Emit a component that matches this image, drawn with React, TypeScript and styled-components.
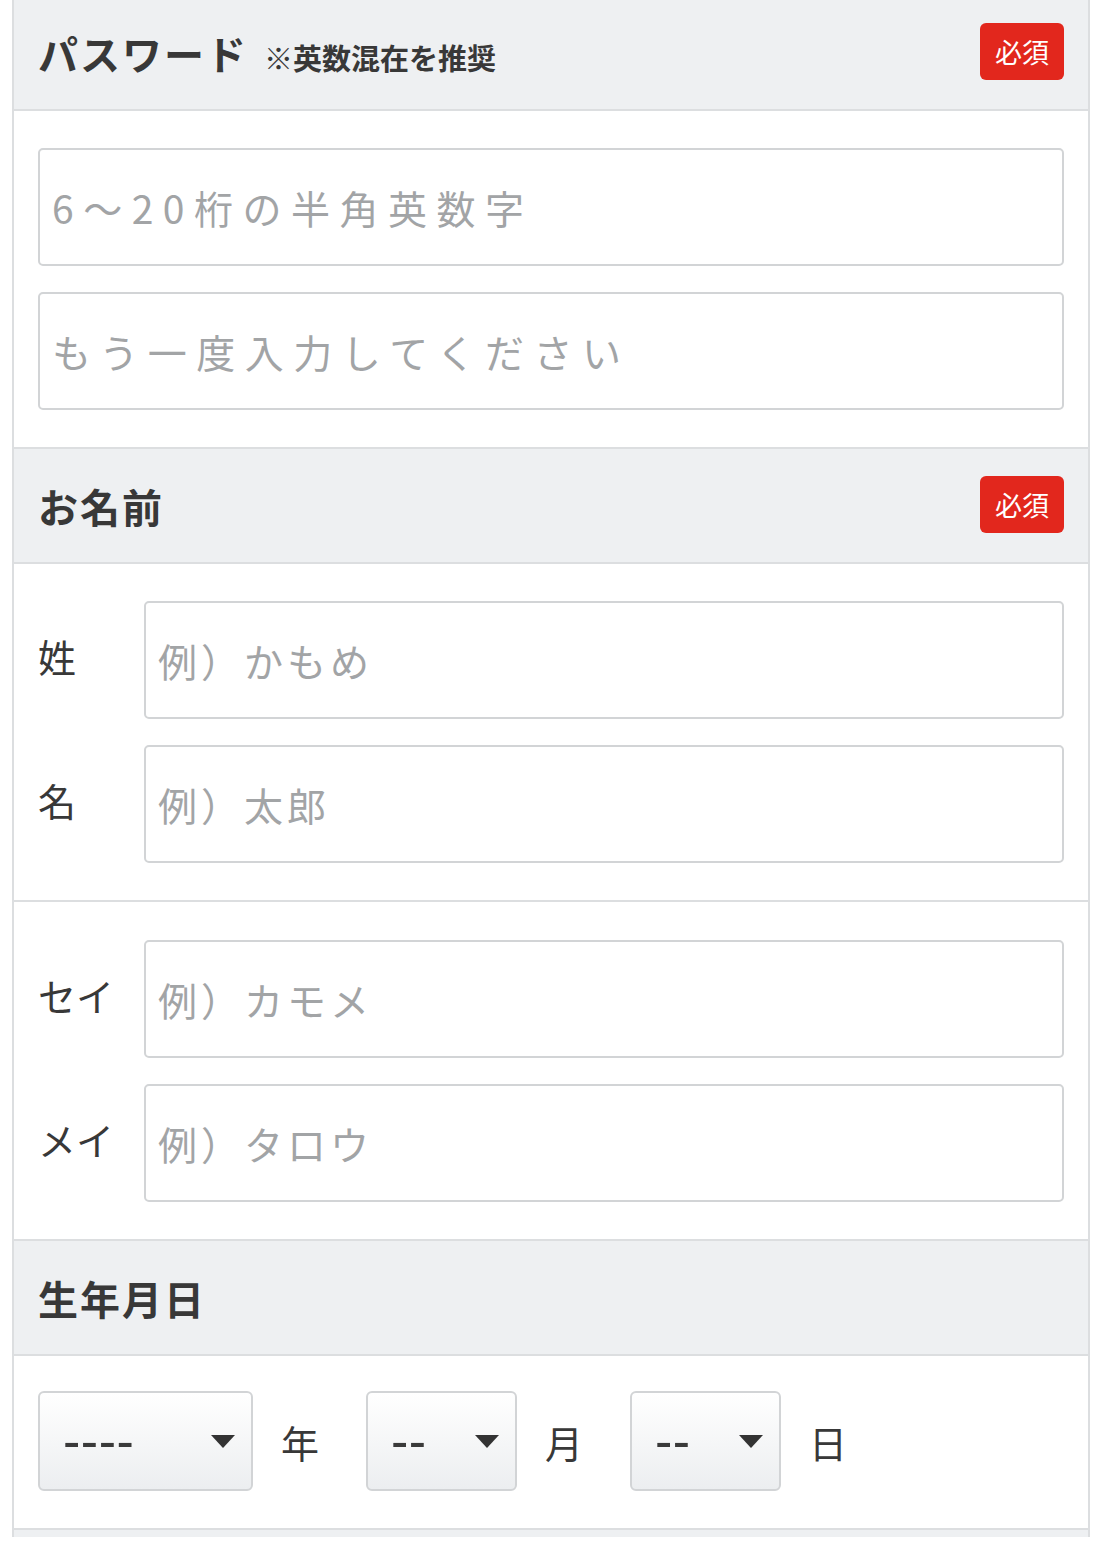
import React from "react";
import styled, { createGlobalStyle } from "styled-components";

const GlobalStyle = createGlobalStyle`
  html, body { margin: 0; padding: 0; background: #ffffff; }
  body { font-family: "Noto Sans CJK JP", "Noto Sans", sans-serif; color: #333; }
  * { box-sizing: border-box; }
`;

const Viewport = styled.div`
  height: 1537px;
  overflow: hidden;
  padding: 0 16px 0 12px;
`;

const Form = styled.div`
  margin-top: -4px;
  border-left: 2px solid #dcdee0;
  border-right: 2px solid #dcdee0;
  background: #fff;
`;

const Section = styled.section`
  & + & {
    border-top: 2px solid #dcdee0;
  }
`;

const Header = styled.div`
  height: 115px;
  background: #eef0f2;
  border-bottom: 2px solid #dcdee0;
  display: flex;
  align-items: center;
  justify-content: space-between;
  padding: 0 24px;
`;

const TitleRow = styled.div`
  display: flex;
  align-items: baseline;
  gap: 16px;
`;

const Title = styled.h2`
  margin: 0;
  font-size: 40px;
  font-weight: 700;
  color: #383838;
  letter-spacing: 2px;
`;

const Note = styled.span`
  font-size: 29px;
  font-weight: 700;
  color: #383838;
`;

const Badge = styled.span`
  width: 84px;
  height: 57px;
  border-radius: 6px;
  background: #e2271d;
  color: #fff;
  font-size: 27px;
  display: flex;
  align-items: center;
  justify-content: center;
  margin-top: -2px;
`;

const Block = styled.div`
  padding: 37px 24px;
  display: flex;
  flex-direction: column;
  gap: 26px;
  & + & {
    border-top: 2px solid #dcdee0;
    padding-top: 38px;
  }
`;

const TextInput = styled.input<{ $spacing: number }>`
  display: block;
  width: 100%;
  height: 118px;
  border: 2px solid #d2d4d6;
  border-radius: 5px;
  background: #fff;
  padding: 0 12px;
  font-family: "Noto Sans CJK JP", "Noto Sans", sans-serif;
  font-size: 39px;
  letter-spacing: ${(p) => p.$spacing}px;
  color: #333;
  outline: none;
  &::placeholder {
    color: #a2a4a6;
  }
`;

const NameRow = styled.div`
  display: grid;
  grid-template-columns: 106px 1fr;
  align-items: center;
`;

const Label = styled.label`
  font-size: 38px;
  color: #383838;
  margin-top: -10px;
`;

const DateBody = styled.div`
  padding: 35px 24px 37px;
  display: flex;
  align-items: center;
  gap: 47px;
`;

const DateGroup = styled.div`
  display: flex;
  align-items: center;
  gap: 28px;
`;

const SelectBox = styled.div<{ $width: number }>`
  width: ${(p) => p.$width}px;
  height: 100px;
  border: 2px solid #d2d4d6;
  border-radius: 6px;
  background: linear-gradient(#ffffff, #eceef0);
  display: flex;
  align-items: center;
  justify-content: space-between;
  padding: 0 16px 0 23px;
`;

const SelectValue = styled.span`
  font-family: "Liberation Sans", sans-serif;
  font-size: 52px;
  font-weight: 400;
  color: #3a3a3a;
  letter-spacing: 0.5px;
  line-height: 1;
`;

const Unit = styled.span`
  font-size: 38px;
  color: #383838;
`;

const Caret = () => (
  <svg width="24" height="13" viewBox="0 0 24 13">
    <path d="M0 0 H24 L12 13 Z" fill="#333" />
  </svg>
);

const DateSelect = ({ width, value, unit }: { width: number; value: string; unit: string }) => (
  <DateGroup>
    <SelectBox $width={width} role="button">
      <SelectValue>{value}</SelectValue>
      <Caret />
    </SelectBox>
    <Unit>{unit}</Unit>
  </DateGroup>
);

export default function App() {
  return (
    <>
      <GlobalStyle />
      <Viewport>
        <Form>
          <Section>
            <Header>
              <TitleRow>
                <Title>パスワード</Title>
                <Note>※英数混在を推奨</Note>
              </TitleRow>
              <Badge>必須</Badge>
            </Header>
            <Block>
              <TextInput $spacing={9.5} type="password" placeholder="6～20桁の半角英数字" />
              <TextInput $spacing={9.5} type="password" placeholder="もう一度入力してください" />
            </Block>
          </Section>

          <Section>
            <Header>
              <TitleRow>
                <Title>お名前</Title>
              </TitleRow>
              <Badge>必須</Badge>
            </Header>
            <Block>
              <NameRow>
                <Label>姓</Label>
                <TextInput $spacing={4} placeholder="例）かもめ" />
              </NameRow>
              <NameRow>
                <Label>名</Label>
                <TextInput $spacing={4} placeholder="例）太郎" />
              </NameRow>
            </Block>
            <Block>
              <NameRow>
                <Label>セイ</Label>
                <TextInput $spacing={4} placeholder="例）カモメ" />
              </NameRow>
              <NameRow>
                <Label>メイ</Label>
                <TextInput $spacing={4} placeholder="例）タロウ" />
              </NameRow>
            </Block>
          </Section>

          <Section>
            <Header>
              <TitleRow>
                <Title>生年月日</Title>
              </TitleRow>
            </Header>
            <DateBody>
              <DateSelect width={215} value="----" unit="年" />
              <DateSelect width={151} value="--" unit="月" />
              <DateSelect width={151} value="--" unit="日" />
            </DateBody>
          </Section>

          <Section>
            <Header />
          </Section>
        </Form>
      </Viewport>
    </>
  );
}
